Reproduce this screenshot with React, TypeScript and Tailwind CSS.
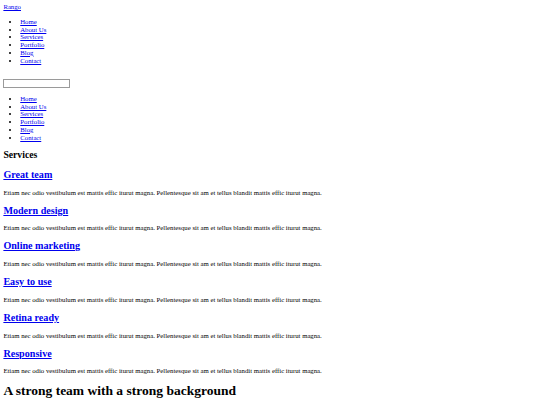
const menu = ['Home', 'About Us', 'Services', 'Portfolio', 'Blog', 'Contact'];

const services = ['Great team', 'Modern design', 'Online marketing', 'Easy to use', 'Retina ready', 'Responsive'];

const blurb =
  'Etiam nec odio vestibulum est mattis effic iturut magna. Pellentesque sit am et tellus blandit mattis effic iturut magna.';

function Menu() {
  return (
    <ul className="my-[6.75px] list-disc pl-[16.875px]">
      {menu.map((item) => (
        <li key={item} className="leading-[7.76px]">
          <a href="#" className="text-[#0000ee] underline">
            {item}
          </a>
        </li>
      ))}
    </ul>
  );
}

export default function App() {
  return (
    <div className="min-h-[405px] bg-white p-[3.375px] font-['Liberation_Serif',serif] text-[6.75px] leading-[7.76px] text-black">
      {/* header */}
      <div>
        <a href="#" className="text-[#0000ee] underline">
          Rango
        </a>
      </div>
      <Menu />

      <form className="mt-[14.5px] flex">
        <input type="text" className="h-[9px] w-[67px] border border-[#9a9a9a] bg-white" />
      </form>
      <Menu />

      {/* services */}
      <h3 className="mt-[7.6px] mb-[8.6px] text-[9.7px] leading-[11.2px] font-bold">Services</h3>
      {services.map((title) => (
        <div key={title}>
          <h2 className="my-[8.2px] text-[10.125px] leading-[11.64px] font-bold">
            <a href="#" className="text-[#0000ee] underline">
              {title}
            </a>
          </h2>
          <p className="my-[6.75px] leading-[7.76px]">{blurb}</p>
        </div>
      ))}

      <h1 className="mt-[7.5px] mb-[9px] text-[13.5px] leading-[15.5px] font-bold">A strong team with a strong background</h1>
    </div>
  );
}
